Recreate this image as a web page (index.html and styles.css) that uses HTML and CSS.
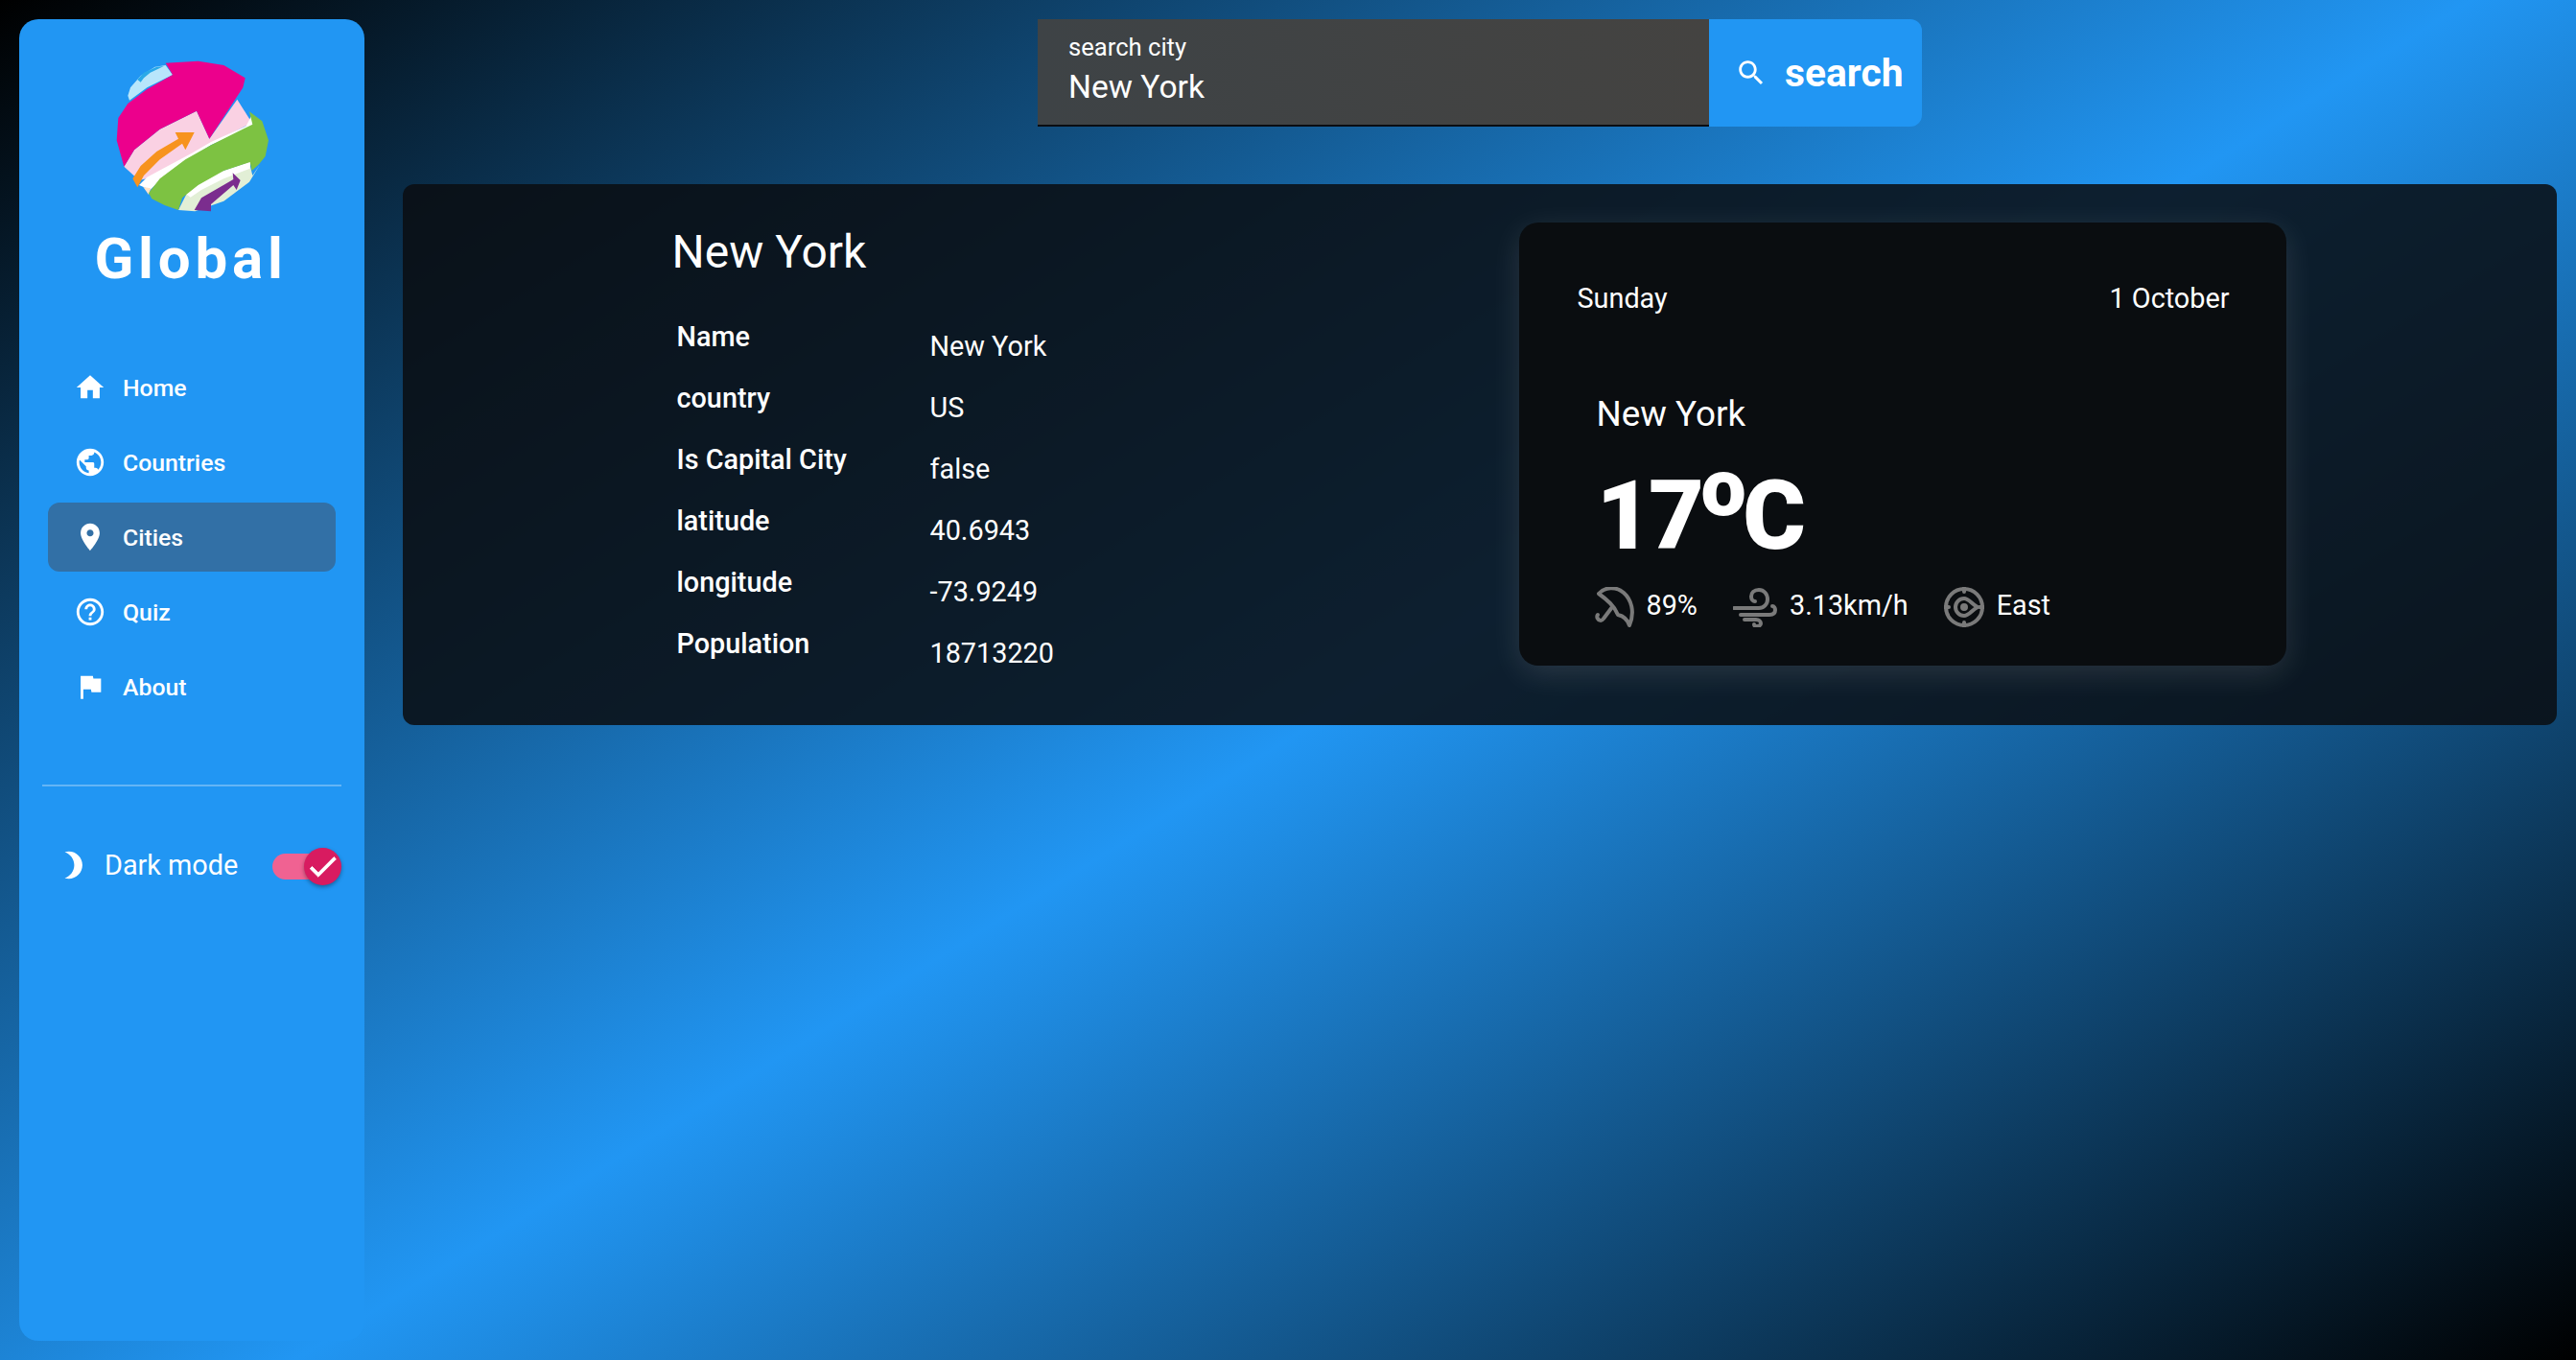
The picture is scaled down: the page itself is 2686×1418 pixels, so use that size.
FILE: index.html
```html
<!DOCTYPE html>
<html>
<head>
	<title>Global</title>
	<link rel="stylesheet" href="styles.css">
</head>
<body>
	<aside class="sidebar">
		<svg class="logo" viewBox="0 40 600 480">
			<path fill="#b8e6fb" d="M100 150L108 125 140 88 185 60 218 55 240 85 160 125 105 165z"/>
			<path fill="#2aa9e8" d="M125 105L150 78 190 60 212 58 200 64 170 78 150 95 140 108 130 100z"/>
			<path fill="#fad1e3" d="M88 372L120 320 200 255 315 198 355 285 442 162 488 235 360 300 200 400 135 415z"/>
			<path fill="#fff" d="M135 430L160 405 210 378 300 330 360 295 470 245 488 210 492 245 360 305 280 355 200 415 170 445z"/>
			<path fill="#ffe3c8" d="M148 436L172 440 165 460z"/>
			<path fill="#ec008c" d="M218 48L320 42 400 55 467 95 460 125 355 285 315 198 200 255 120 320 88 372 65 290 70 220 100 175 160 130 240 85z"/>
			<path fill="#f7931e" d="M115 410L130 437 150 400 200 350 270 300 280 320 308 265 248 265 258 285 190 325 140 370z"/>
			<path fill="#e2efd6" d="M258 508L285 455 360 400 480 360 490 400 512 368 480 420 400 480 310 512z"/>
			<path fill="#fff" d="M282 458L360 398 484 356 482 378 400 410 330 445 296 468z"/>
			<path fill="#7dc242" d="M165 455L200 410 280 350 360 305 490 240 480 200 520 230 540 290 530 340 510 365 488 385 482 358 400 385 320 430 270 470 258 508 215 493 175 473z"/>
			<path fill="#7b2d8e" d="M308 508L330 470 390 435 430 412 428 392 452 415 440 445 430 430 395 460 360 490 360 512z"/>
		</svg>
		<h1 class="brand">Global</h1>

		<nav class="nav">
			<a class="nav-item">
				<svg class="nav-icon" viewBox="0 0 24 24"><path d="M10 20v-6h4v6h5v-8h3L12 3 2 12h3v8z"/></svg>
				Home
			</a>
			<a class="nav-item">
				<svg class="nav-icon" viewBox="0 0 24 24"><path d="M12 2C6.48 2 2 6.48 2 12s4.48 10 10 10 10-4.48 10-10S17.52 2 12 2zm-1 17.93c-3.95-.49-7-3.85-7-7.93 0-.62.08-1.21.21-1.79L9 15v1c0 1.1.9 2 2 2v1.93zm6.9-2.54c-.26-.81-1-1.39-1.9-1.39h-1v-3c0-.55-.45-1-1-1H8v-2h2c.55 0 1-.45 1-1V7h2c1.1 0 2-.9 2-2v-.41c2.93 1.19 5 4.06 5 7.41 0 2.08-.8 3.97-2.1 5.39z"/></svg>
				Countries
			</a>
			<a class="nav-item active">
				<svg class="nav-icon" viewBox="0 0 24 24"><path d="M12 2C8.13 2 5 5.13 5 9c0 5.25 7 13 7 13s7-7.75 7-13c0-3.87-3.13-7-7-7zm0 9.5c-1.38 0-2.5-1.12-2.5-2.5s1.12-2.5 2.5-2.5 2.5 1.12 2.5 2.5-1.12 2.5-2.5 2.5z"/></svg>
				Cities
			</a>
			<a class="nav-item">
				<svg class="nav-icon" viewBox="0 0 24 24"><path d="M11 18h2v-2h-2v2zm1-16C6.48 2 2 6.48 2 12s4.48 10 10 10 10-4.48 10-10S17.52 2 12 2zm0 18c-4.41 0-8-3.59-8-8s3.59-8 8-8 8 3.59 8 8-3.59 8-8 8zm0-14c-2.21 0-4 1.79-4 4h2c0-1.1.9-2 2-2s2 .9 2 2c0 2-3 1.75-3 5h2c0-2.25 3-2.5 3-5 0-2.21-1.79-4-4-4z"/></svg>
				Quiz
			</a>
			<a class="nav-item">
				<svg class="nav-icon" viewBox="0 0 24 24"><path d="M14.4 6L14 4H5v17h2v-7h5.6l.4 2h7V6z"/></svg>
				About
			</a>
		</nav>

		<hr class="divider">

		<div class="dark-mode">
			<svg class="moon" viewBox="0 0 24 24"><path d="M9 2c-1.05 0-2.05.16-3 .46 4.06 1.27 7 5.06 7 9.54 0 4.48-2.94 8.27-7 9.54.95.3 1.95.46 3 .46 5.52 0 10-4.48 10-10S14.52 2 9 2z"/></svg>
			<span class="dark-label">Dark mode</span>
			<div class="switch">
				<div class="switch-thumb">
					<svg viewBox="0 0 24 24"><path d="M9 16.17L4.83 12l-1.42 1.41L9 19 21 7l-1.41-1.41z"/></svg>
				</div>
			</div>
		</div>
	</aside>

	<main class="main">
		<form class="search">
			<div class="search-field">
				<label class="search-label">search city</label>
				<div class="search-value">New York</div>
			</div>
			<button type="button" class="search-btn">
				<svg viewBox="0 0 24 24"><path d="M15.5 14h-.79l-.28-.27C15.41 12.59 16 11.11 16 9.5 16 5.91 13.09 3 9.5 3S3 5.91 3 9.5 5.91 16 9.5 16c1.61 0 3.09-.59 4.23-1.57l.27.28v.79l5 4.99L20.49 19l-4.99-5zm-6 0C7.01 14 5 11.99 5 9.5S7.01 5 9.5 5 14 7.01 14 9.5 11.99 14 9.5 14z"/></svg>
				search
			</button>
		</form>

		<section class="panel">
			<div class="info">
				<h2 class="info-title">New York</h2>
				<dl class="info-grid">
					<dt>Name</dt><dd>New York</dd>
					<dt>country</dt><dd>US</dd>
					<dt>Is Capital City</dt><dd>false</dd>
					<dt>latitude</dt><dd>40.6943</dd>
					<dt>longitude</dt><dd>-73.9249</dd>
					<dt>Population</dt><dd>18713220</dd>
				</dl>
			</div>

			<div class="card">
				<div class="card-head">
					<span>Sunday</span>
					<span>1 October</span>
				</div>
				<div class="card-city">New York</div>
				<div class="card-temp">17<span class="card-deg">o</span>C</div>
				<div class="card-stats">
					<svg class="stat-icon" width="41" height="42" viewBox="0 0 41 42">
						<path d="M4 7C10 0 22-1 30 6c8 7 12 20 6 34Q33 31 24 29 21 22 16 17 11 12 4 7z"/>
						<path d="M18 21L9 33c-2 3-5 2-6 0-1-1-1-3 0-4"/>
					</svg>
					<span class="stat-text">89%</span>
					<svg class="stat-icon" width="46" height="42" viewBox="0 0 46 42">
						<path d="M1 22h26c5 0 9-4 9-9 0-6-4-10-9-10-5 0-8 3-8 7 0 3 2 5 4 5"/>
						<path d="M8 29h30c4 0 6-2 6-5 0-2-1-4-3-4"/>
						<path d="M12 34h12c3 0 5 2 5 4 0 2-2 3-4 3-2 0-3-1-3-2"/>
					</svg>
					<span class="stat-text">3.13km/h</span>
					<svg class="stat-icon" width="42" height="42" viewBox="0 0 42 42">
						<circle cx="21" cy="21" r="19"/>
						<path d="M21 1v4M21 37v4M1 21h4M37 21h4"/>
						<path d="M21 12a9 9 0 1 0 0 18c5 0 8-6 14-9-6-3-9-9-14-9z"/>
						<circle cx="21" cy="21" r="2"/>
					</svg>
					<span class="stat-text">East</span>
				</div>
			</div>
		</section>
	</main>
</body>
</html>
```

FILE: styles.css
```css
* {
	box-sizing: border-box;
}

html, body {
	height: 100%;
}

body {
	margin: 0;
	min-height: 1418px;
	display: flex;
	overflow: hidden;
	font-family: Roboto, "Liberation Sans", sans-serif;
	color: #fff;
	background: linear-gradient(148deg, #000, #2196f3 52%, #000);
}

/* sidebar */
.sidebar {
	width: 360px;
	height: 1378px;
	margin: 20px 0 0 20px;
	padding-top: 43px;
	flex-shrink: 0;
	background-color: #2196f3;
	border-radius: 20px;
}

.logo {
	display: block;
	width: 200px;
	height: 160px;
	margin: 0 0 0 80px;
}

.brand {
	margin: 12px 0 0;
	padding-right: 2px;
	font-size: 60px;
	line-height: 70px;
	font-weight: 700;
	letter-spacing: 4.8px;
	text-align: center;
}

.nav {
	margin: 63px 30px 0;
}

.nav-item {
	display: flex;
	align-items: center;
	height: 72px;
	margin-bottom: 6px;
	padding-left: 27px;
	font-size: 24.8px;
	font-weight: 500;
	border-radius: 12px;
}

.nav-item.active {
	background-color: #3270a6;
}

.nav-icon {
	width: 34px;
	height: 34px;
	margin-right: 17px;
	fill: #fff;
}

.divider {
	height: 2px;
	margin: 66px 24px 0;
	border: none;
	background-color: rgba(255, 255, 255, 0.3);
}

.dark-mode {
	display: flex;
	align-items: center;
	margin-top: 62px;
	padding-left: 39px;
	height: 40px;
}

.moon {
	width: 34px;
	height: 34px;
	fill: #fff;
}

.dark-label {
	margin-left: 16px;
	font-size: 28.8px;
}

.switch {
	position: relative;
	width: 62px;
	height: 27px;
	margin: 2px 0 0 36px;
	background-color: #f06292;
	border-radius: 14px;
}

.switch-thumb {
	position: absolute;
	top: -6px;
	right: -10px;
	width: 39px;
	height: 39px;
	display: flex;
	align-items: center;
	justify-content: center;
	background-color: #d81b60;
	border-radius: 50%;
	box-shadow: 0 2px 4px rgba(0, 0, 0, 0.35);
}

.switch-thumb svg {
	width: 37px;
	height: 37px;
	flex-shrink: 0;
	fill: #fff;
	stroke: #fff;
	stroke-width: 0.6;
}

/* main area */
.main {
	flex: 1;
	padding: 20px 20px 0 40px;
}

.search {
	display: flex;
	width: 922px;
	height: 112px;
	margin: 0 auto 60px;
}

.search-field {
	flex: 1;
	padding: 14px 32px 0;
	background: linear-gradient(to right, #3e4346, #444341);
	border-bottom: 2px solid #0a0d12;
}

.search-label {
	display: block;
	font-size: 25.6px;
	line-height: 30px;
}

.search-value {
	padding-top: 2px;
	font-size: 33.6px;
	line-height: 50px;
}

.search-btn {
	display: flex;
	align-items: center;
	width: 222px;
	padding: 0 0 0 27px;
	font-family: inherit;
	font-size: 40.8px;
	font-weight: 700;
	color: #fff;
	background-color: #2196f3;
	border: none;
	border-radius: 0 12px 12px 0;
}

.search-btn svg {
	width: 34px;
	height: 34px;
	margin-right: 18px;
	fill: #fff;
}

.panel {
	display: flex;
	justify-content: center;
	height: 564px;
	padding-top: 40px;
	background-color: rgba(10, 14, 18, 0.87);
	border-radius: 12px;
}

.info {
	width: 881px;
}

.info-title {
	margin: 2px 0 0 -2px;
	font-size: 48px;
	line-height: 58px;
	font-weight: 400;
}

.info-grid {
	display: grid;
	grid-template-columns: 264px 1fr;
	grid-auto-rows: 64px;
	margin: 39px 0 0 3px;
}

.info-grid dt {
	font-size: 28.8px;
	line-height: 40px;
	font-weight: 500;
}

.info-grid dd {
	margin: 0;
	padding-top: 10px;
	font-size: 28.8px;
	line-height: 40px;
}

.card {
	width: 800px;
	height: 462px;
	padding: 63px 59px 0 61px;
	background-color: #0a0d10;
	border-radius: 20px;
	box-shadow: 0 8px 32px rgba(255, 255, 255, 0.12);
}

.card-head {
	display: flex;
	justify-content: space-between;
	font-size: 28.8px;
	line-height: 32px;
}

.card-city {
	margin: 83px 0 0 20px;
	font-size: 36.8px;
	line-height: 44px;
}

.card-temp {
	margin: 24px 0 0 20px;
	font-size: 100px;
	line-height: 120px;
	font-weight: 900;
	letter-spacing: -3.5px;
}

.card-deg {
	font-size: 84px;
	line-height: 0;
	vertical-align: 35px;
}

.card-stats {
	display: flex;
	align-items: center;
	margin: 14px 0 0 18px;
}

.stat-icon {
	fill: none;
	stroke: #7a7a7a;
	stroke-width: 4;
	stroke-linecap: round;
	stroke-linejoin: round;
}

.stat-text {
	margin: -4px 37px 0 13px;
	font-size: 28.8px;
	line-height: 40px;
}
```
